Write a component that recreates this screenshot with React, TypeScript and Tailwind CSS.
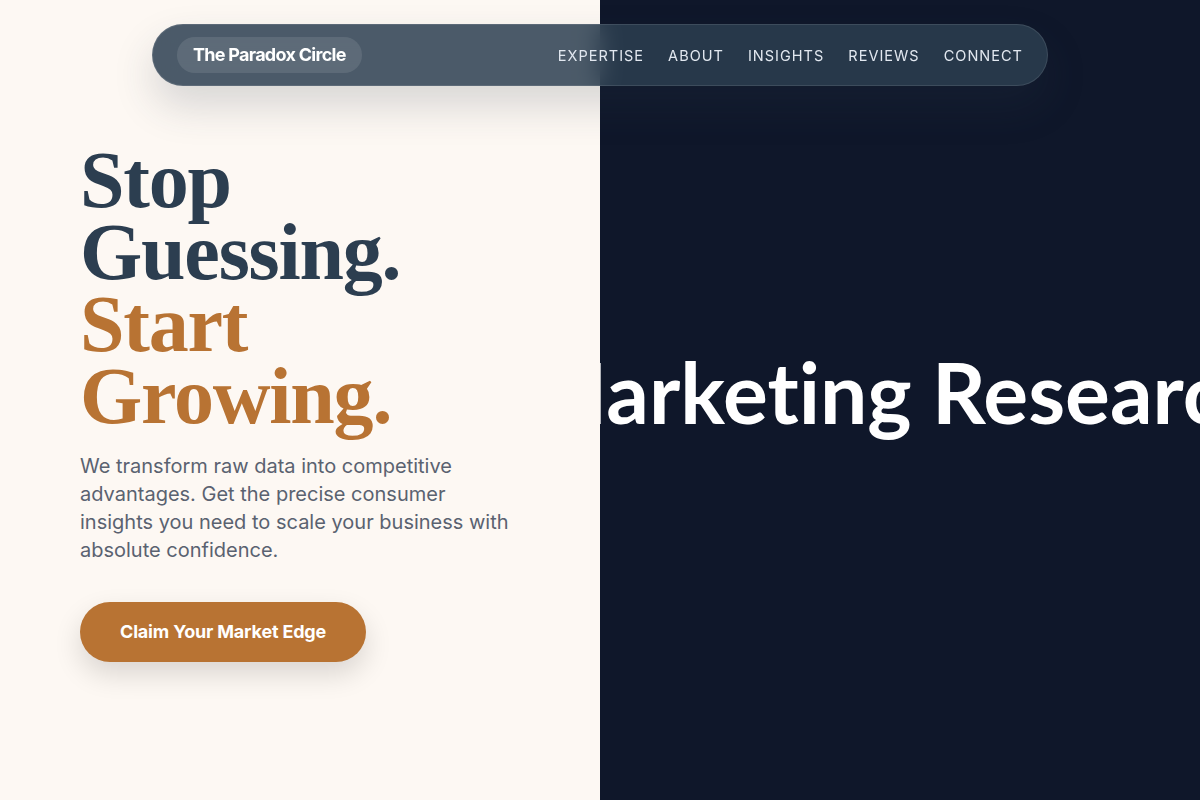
const links = ["Expertise", "About", "Insights", "Reviews", "Connect"];

function Navbar() {
  return (
    <header className="fixed top-6 left-0 right-0 z-50 px-6">
      <nav className="max-w-4xl mx-auto flex items-center justify-between rounded-full border border-white/10 bg-[#2c3e50]/85 backdrop-blur-md px-6 py-3 shadow-[0_20px_40px_rgba(44,62,80,0.18)]">
        <a href="#" className="rounded-full bg-white/10 px-4 py-1.5 text-[18px] leading-6 font-bold tracking-[-0.04em] text-white">
          The Paradox Circle
        </a>
        <ul className="flex items-center gap-6">
          {links.map((link) => (
            <li key={link}>
              <a href="#" className="text-[14.5px] uppercase tracking-[0.07em] text-slate-200">
                {link}
              </a>
            </li>
          ))}
        </ul>
      </nav>
    </header>
  );
}

export default function App() {
  return (
    <div className="font-['Inter',sans-serif]">
      <Navbar />

      <main className="grid grid-cols-2 h-screen">
        {/* Left: copy */}
        <section className="bg-[#fdf8f3] pl-20 pt-[144px]">
          <h1 className="font-['Liberation_Serif',serif] font-bold text-[80px] leading-[0.9] tracking-[-0.015em] text-[#2c3e50]">
            Stop
            <br />
            Guessing.
            <br />
            <span className="text-[#b87333]">
              Start
              <br />
              Growing.
            </span>
          </h1>
          <p className="mt-5 max-w-[436px] text-[20px] leading-7 text-[#5a6270]">
            We transform raw data into competitive advantages. Get the precise consumer insights you need to scale your business with absolute confidence.
          </p>
          <button className="mt-[38px] rounded-full bg-[#b87333] px-10 py-4 text-[18px] leading-7 font-bold tracking-[-0.01em] text-white shadow-[0_12px_28px_rgba(0,0,0,0.14)]">
            Claim Your Market Edge
          </button>
        </section>

        {/* Right: scrolling wordmark */}
        <section className="bg-[#0f172a] overflow-hidden flex items-center">
          <div className="-ml-[72px] -mt-4 whitespace-nowrap font-['Lato',sans-serif] font-bold text-[84px] leading-none text-white [font-variant-ligatures:none]">
            Marketing Research
          </div>
        </section>
      </main>
    </div>
  );
}
